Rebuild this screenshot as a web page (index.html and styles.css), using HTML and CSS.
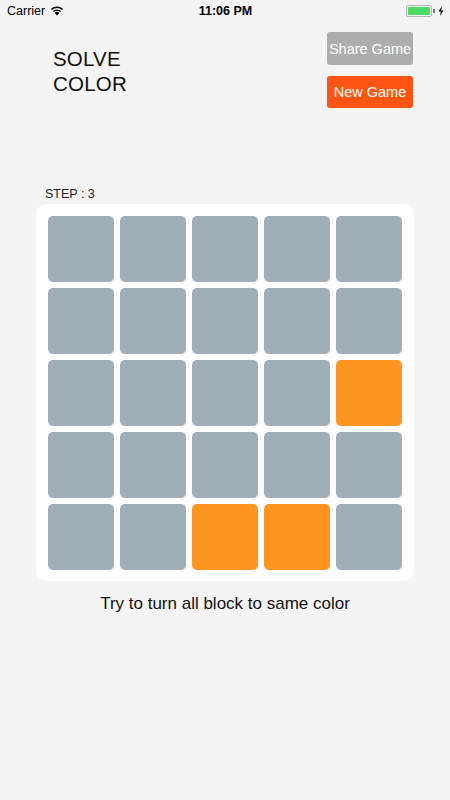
FILE: index.html
```html
<!DOCTYPE html>
<html>
<head>
<meta charset="utf-8">
<link rel="stylesheet" href="styles.css">
</head>
<body>
<div class="status">
  <div class="carrier">Carrier
    <svg class="wifi" width="14" height="10" viewBox="0 0 14 10"><path d="M7 9.5 L4.6 6.9 A3.4 3.4 0 0 1 9.4 6.9 Z" fill="#000"/><path d="M2.9 5.1 A5.9 5.9 0 0 1 11.1 5.1 L10.1 6.1 A4.5 4.5 0 0 0 3.9 6.1 Z" fill="#000"/><path d="M0.9 3.1 A8.7 8.7 0 0 1 13.1 3.1 L12.1 4.1 A7.3 7.3 0 0 0 1.9 4.1 Z" fill="#000"/></svg>
  </div>
  <div class="time">11:06 PM</div>
  <div class="batt">
    <div class="batt-body"><div class="batt-fill"></div></div><div class="batt-tip"></div>
    <svg class="bolt" width="6" height="10" viewBox="0 0 6 10"><path d="M4 0 L0.5 5.6 L2.8 5.6 L2 10 L5.5 4.4 L3.2 4.4 Z" fill="#000"/></svg>
  </div>
</div>
<div class="header">
  <h1 class="title">SOLVE<br>COLOR</h1>
  <div class="buttons">
    <div class="btn share">Share Game</div>
    <div class="btn new">New Game</div>
  </div>
</div>
<div class="game">
  <div class="step">STEP : 3</div>
  <div class="board">
    <div class="tile"></div><div class="tile"></div><div class="tile"></div><div class="tile"></div><div class="tile"></div>
    <div class="tile"></div><div class="tile"></div><div class="tile"></div><div class="tile"></div><div class="tile"></div>
    <div class="tile"></div><div class="tile"></div><div class="tile"></div><div class="tile"></div><div class="tile orange"></div>
    <div class="tile"></div><div class="tile"></div><div class="tile"></div><div class="tile"></div><div class="tile"></div>
    <div class="tile"></div><div class="tile"></div><div class="tile orange"></div><div class="tile orange"></div><div class="tile"></div>
  </div>
  <div class="hint">Try to turn all block to same color</div>
</div>
</body>
</html>
```
FILE: styles.css
```css
html, body {
  margin: 0;
  padding: 0;
  background: #f4f4f4;
  font-family: "Liberation Sans", Arial, sans-serif;
  width: 450px;
  height: 800px;
  overflow: hidden;
}
.status {
  height: 22px;
  display: flex;
  align-items: center;
  justify-content: space-between;
  padding: 0 6px 0 7px;
  font-size: 12.5px;
  color: #000;
}
.carrier {
  display: flex;
  align-items: center;
  gap: 5px;
  width: 120px;
}
.time {
  font-weight: bold;
  font-size: 12.5px;
}
.batt {
  width: 120px;
  display: flex;
  justify-content: flex-end;
  align-items: center;
}
.batt-body {
  width: 22px;
  height: 8px;
  border: 1px solid #b5b5b5;
  border-radius: 2px;
  padding: 1px;
}
.batt-fill {
  width: 100%;
  height: 100%;
  background: #4cd964;
  border-radius: 1px;
}
.batt-tip {
  width: 1.5px;
  height: 4px;
  background: #777;
  margin-left: 1px;
}
.bolt {
  margin-left: 3px;
}
.header {
  display: flex;
  justify-content: space-between;
  padding: 10px 37px 0 53px;
}
.title {
  margin: 14px 0 0 0;
  font-size: 20.5px;
  font-weight: normal;
  line-height: 25px;
  color: #111;
  letter-spacing: 0.2px;
}
.buttons {
  display: flex;
  flex-direction: column;
  gap: 11px;
}
.btn {
  width: 86px;
  height: 33px;
  border-radius: 3px;
  color: #fff;
  font-size: 14.5px;
  display: flex;
  align-items: center;
  justify-content: center;
}
.share { background: #adadad; }
.new { background: #ff5412; height: 32px; }
.game {
  margin-top: 79px;
  padding: 0 36px;
}
.step {
  font-size: 12.5px;
  color: #222;
  padding-left: 9px;
  height: 17px;
  line-height: 15px;
  font-weight: 300;
}
.board {
  background: #fff;
  border-radius: 10px;
  padding: 12px;
  display: grid;
  grid-template-columns: repeat(5, 66px);
  grid-auto-rows: 66px;
  gap: 6px;
  height: 353px;
}
.tile {
  background: #a0aeb7;
  border-radius: 5px;
}
.tile.orange { background: #ff9521; }
.hint {
  text-align: center;
  font-size: 17px;
  color: #111;
  margin-top: 13px;
}
```
